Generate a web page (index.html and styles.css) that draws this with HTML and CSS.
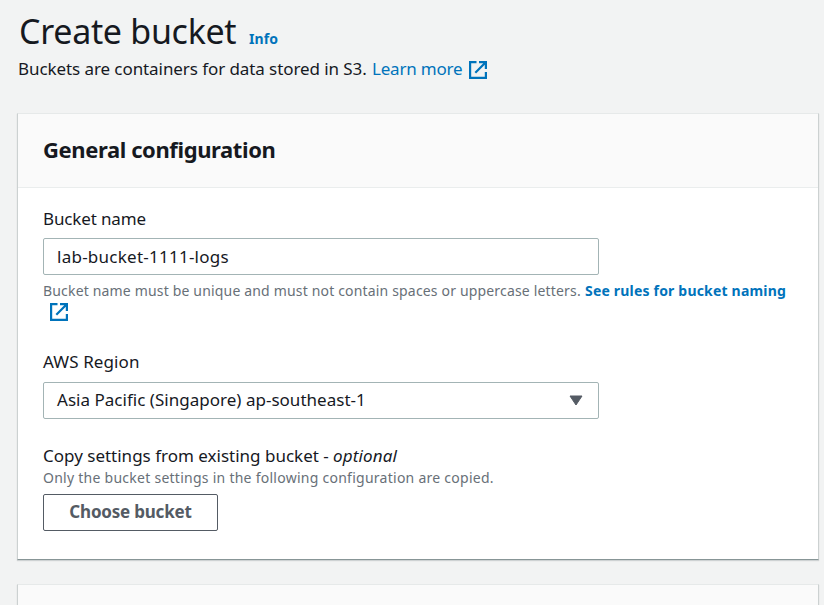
FILE: index.html
```
<!DOCTYPE html>
<html lang="en">
<head>
<meta charset="utf-8">
<title>Create bucket</title>
<link rel="stylesheet" href="styles.css">
</head>
<body>
<main class="page">
  <header class="page-header">
    <div class="title-row"><h1>Create bucket</h1><a class="info">Info</a></div>
    <p class="intro"><span class="intro-text">Buckets are containers for data stored in S3.</span><a class="learn">Learn more</a><svg class="ext" viewBox="0 0 18 18"><path d="M7.5 1.1H1.1v15.8h15.8V11M10 1.1h6.9V8M16.5 1.5L6.3 11.7"/></svg></p>
  </header>
  <section class="card">
    <div class="card-header"><h2>General configuration</h2></div>
    <div class="card-body">
      <div class="field name-field">
        <label class="label l-name">Bucket name</label>
        <div class="control"><span class="v-name">lab-bucket-1111-logs</span></div>
        <div class="hint"><span class="h-name">Bucket name must be unique and must not contain spaces or uppercase letters.</span><a class="rules">See rules for bucket naming</a></div>
        <svg class="ext ext-rules" viewBox="0 0 18 18"><path d="M7.5 1.1H1.1v15.8h15.8V11M10 1.1h6.9V8M16.5 1.5L6.3 11.7"/></svg>
      </div>
      <div class="field region-field">
        <label class="label l-region">AWS Region</label>
        <div class="control select"><span class="v-region">Asia Pacific (Singapore) ap-southeast-1</span><svg class="caret" viewBox="0 0 14 11"><path d="M1 1h12L7 10z"/></svg></div>
      </div>
      <div class="field">
        <div class="label copy-label"><span class="l-copy">Copy settings from existing bucket -</span><em>optional</em></div>
        <div class="hint copy-hint"><span class="h-copy">Only the bucket settings in the following configuration are copied.</span></div>
        <button class="button"><span>Choose bucket</span></button>
      </div>
    </div>
  </section>
  <section class="card next"><div class="card-header"></div></section>
</main>
</body>
</html>
```
FILE: styles.css
```
* { box-sizing: border-box; }
body {
  margin: 0;
  background: #f2f3f3;
  color: #16191f;
  font: 17px/24px "Noto Sans", "Open Sans", sans-serif;
  white-space: nowrap;
}
.page { height: 605px; overflow: hidden; padding: 0 5px 0 17px; }
.page-header { height: 113px; padding-top: 7px; }
.title-row { display: flex; align-items: baseline; height: 50px; padding-left: 2px; }
h1 { margin: 0; width: 230px; font-size: 34px; line-height: 48px; font-weight: 400; letter-spacing: -.3px; }
a { color: #0073bb; }
.info { font-size: 14px; font-weight: 700; letter-spacing: .1px; }
.intro { display: flex; margin: 0; padding-left: 1px; }
.intro-text { width: 354px; letter-spacing: -.08px; }
.learn { width: 97px; letter-spacing: -.2px; }
.ext { display: block; width: 18px; height: 18px; fill: none; stroke: #0073bb; stroke-width: 2.2; }
.intro .ext { margin-top: 4px; }
.card {
  height: 447px;
  background: #fff;
  border: 1px solid #ccd1d1;
  border-top-color: #e6e9e9;
  border-bottom-color: #879596;
  box-shadow: 0 1px 1px rgba(0, 28, 36, .15);
}
.card-header { height: 74px; padding: 19px 25px; background: #fafafa; border-bottom: 1px solid #eaeded; }
h2 { margin: 0; font-size: 22px; line-height: 32px; font-weight: 700; letter-spacing: -.4px; }
.card-body { padding: 19px 25px; }
.name-field { height: 143px; }
.region-field { height: 94px; }
.label { display: block; height: 31px; }
.l-name { letter-spacing: -.15px; }
.l-region { height: 32px; letter-spacing: .1px; }
.control {
  display: flex;
  align-items: center;
  justify-content: space-between;
  width: 556px;
  height: 37px;
  padding: 0 15px 0 13px;
  border: 1px solid #a3b4b5;
  border-radius: 2px;
}
.select { padding-bottom: 2px; }
.v-name { letter-spacing: .25px; }
.v-region { letter-spacing: .02px; }
.caret { width: 14px; height: 11px; margin-top: 1px; fill: #545b64; stroke: #545b64; stroke-linejoin: round; }
.hint { display: flex; height: 22px; padding-top: 5px; font-size: 14px; line-height: 22px; color: #687078; }
.h-name { width: 542px; letter-spacing: .17px; }
.rules { font-weight: 700; letter-spacing: .19px; }
.ext-rules { margin: 6px 0 0 7px; }
.copy-label { display: flex; height: 23px; }
.copy-label em { letter-spacing: .15px; }
.l-copy { width: 290px; }
.copy-hint { padding: 0; }
.h-copy { letter-spacing: .26px; }
.button {
  display: block;
  width: 175px;
  height: 37px;
  margin: 5px 0 0;
  padding: 0 0 2px;
  border: 1px solid #545b64;
  border-radius: 2px;
  background: #fff;
  color: #545b64;
  font: 700 17px/33px "Noto Sans", sans-serif;
  letter-spacing: -.2px;
}
.next { margin-top: 24px; }
```
